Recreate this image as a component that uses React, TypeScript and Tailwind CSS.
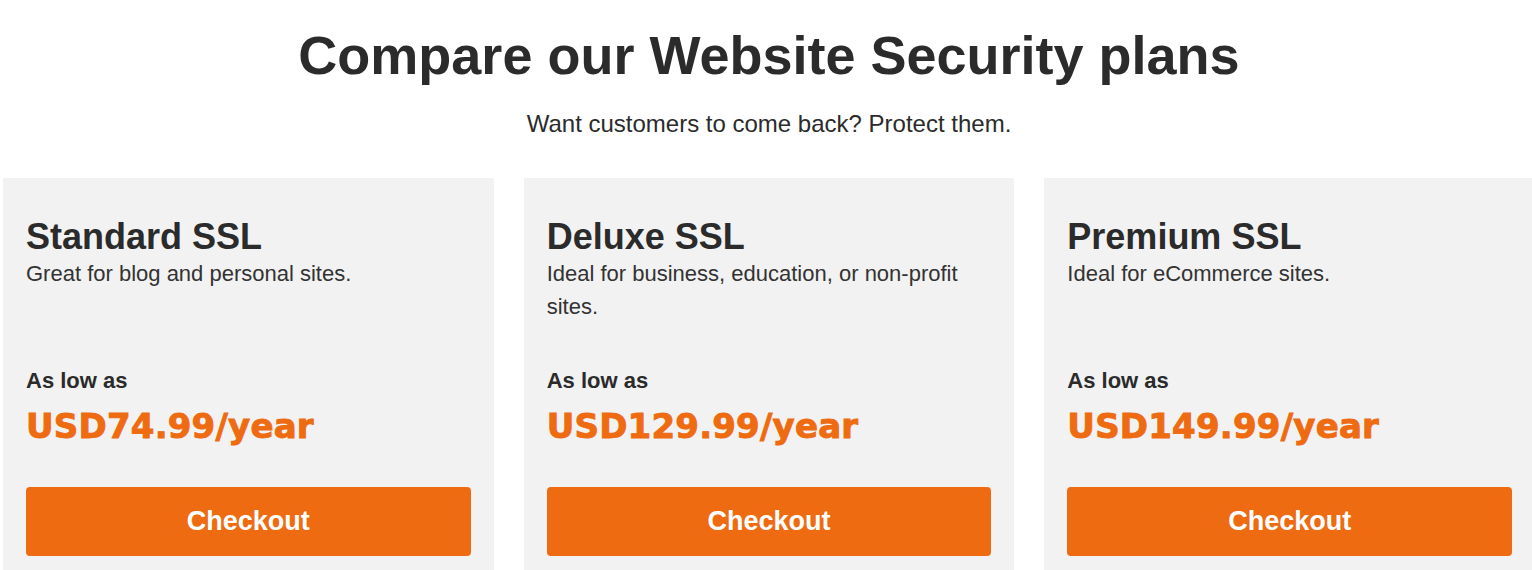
import React from "react";

const plans = [
  { name: "Standard SSL", desc: "Great for blog and personal sites.", price: "USD74.99/year" },
  { name: "Deluxe SSL", desc: "Ideal for business, education, or non-profit sites.", price: "USD129.99/year" },
  { name: "Premium SSL", desc: "Ideal for eCommerce sites.", price: "USD149.99/year" },
];

export default function App() {
  return (
    <div className="w-full h-[570px] overflow-hidden bg-white">
      <div className="w-[1538px] px-[3px] text-[#2b2b2b] font-['Liberation_Sans',Arial,sans-serif]">
        <h1 className="mt-[25px] text-center text-[54px] leading-[60px] font-bold">
          Compare our Website Security plans
        </h1>
        <p className="mt-[23px] text-center text-[24px] leading-[32px]">
          Want customers to come back? Protect them.
        </p>
        <div className="mt-[38px] grid grid-cols-3 gap-[30px]">
          {plans.map((p) => (
            <div key={p.name} className="bg-[#f2f2f2] px-[23px] pt-[39px] pb-[40px]">
              <h2 className="text-[36px] leading-[40px] font-bold">{p.name}</h2>
              <p className="mt-[0px] h-[109px] text-[22px] leading-[33px] text-[#333333] pr-[20px]">{p.desc}</p>
              <div className="text-[22px] leading-[30px] font-bold">As low as</div>
              <div className="mt-[8px] text-[34px] leading-[44px] font-bold text-[#ee6b11] font-['DejaVu_Sans',sans-serif] [-webkit-text-stroke:0.9px_#ee6b11] tracking-[0.2px]">
                {p.price}
              </div>
              <button className="mt-[39px] w-full h-[69px] rounded-[4px] bg-[#ee6b11] text-white text-[27px] font-bold">
                Checkout
              </button>
            </div>
          ))}
        </div>
      </div>
    </div>
  );
}
